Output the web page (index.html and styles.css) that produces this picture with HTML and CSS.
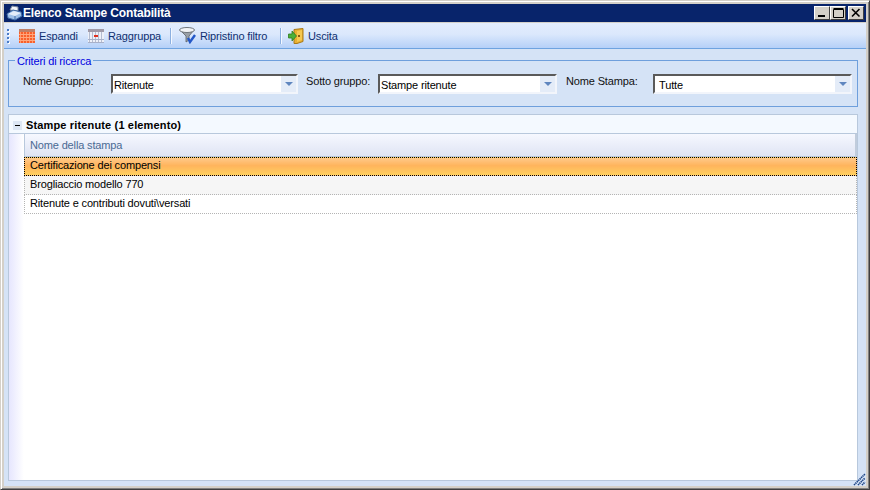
FILE: index.html
```html
<!DOCTYPE html>
<html lang="it">
<head>
    <meta charset="UTF-8">
    <title>Elenco Stampe Contabilità</title>
    <link rel="stylesheet" href="styles.css">
</head>
<body>
    <div class="window">
        <div class="titlebar">
            <svg class="title_icon" width="17" height="16" viewBox="0 0 17 16">
                <path d="M4 5 L6 1 L12 2 L12 6 Z" fill="#f4f6fa" stroke="#7d8aa0" stroke-width="1"/>
                <path d="M1 9 L7 5 L15 7 L16 11 L9 15 L2 13 Z" fill="#9fc0e8" stroke="#3f6aa5" stroke-width="1"/>
                <path d="M2 9 L8 6 L15 8 L9 11 Z" fill="#e4edf9"/>
                <path d="M9 11 L9 15" stroke="#3f6aa5"/>
            </svg>
            <span class="title_text">Elenco Stampe Contabilità</span>
            <div class="title_buttons">
                <button class="caption_btn"><svg width="10" height="10" viewBox="0 0 10 10"><rect x="1" y="7" width="7" height="2" fill="#000"/></svg></button>
                <button class="caption_btn"><svg width="11" height="10" viewBox="0 0 11 10"><path d="M0.5 1.5 H10.5 V9.5 H0.5 Z M0.5 0.5 H10.5" fill="none" stroke="#000"/></svg></button>
                <button class="caption_btn close"><svg width="10" height="10" viewBox="0 0 10 10"><path d="M1 1 L8.5 8.5 M8.5 1 L1 8.5" stroke="#000" stroke-width="1.6"/></svg></button>
            </div>
        </div>

        <div class="toolbar">
            <div class="grip"><i></i><i></i><i></i><i></i></div>
            <div class="tool tool_espandi">
                <svg width="16" height="14" viewBox="0 0 16 14">
                    <rect x="0" y="0" width="16" height="14" fill="#f8602c"/>
                    <rect x="0" y="0" width="16" height="3" fill="#c08068"/>
                    <path d="M1.5 3 V14 M4.5 3 V14 M7.5 3 V14 M10.5 3 V14 M13.5 3 V14" stroke="#ff9a6c"/>
                    <path d="M0 5.5 H16 M0 8.5 H16 M0 11.5 H16" stroke="#ffa880"/>
                </svg>
                <span>Espandi</span>
            </div>
            <div class="tool tool_raggruppa">
                <svg width="16" height="14" viewBox="0 0 16 14">
                    <rect x="0" y="0" width="16" height="14" fill="#eef0f8"/>
                    <rect x="0" y="0" width="16" height="3" fill="#a09aa8"/>
                    <path d="M1.5 3 V14 M4.5 3 V14 M7.5 3 V14 M10.5 3 V14 M13.5 3 V14" stroke="#b4bcd0"/>
                    <path d="M0 10.5 H16 M0 13.5 H16" stroke="#a8b0c8"/>
                    <rect x="6" y="6" width="4" height="2" fill="#e03020"/>
                </svg>
                <span>Raggruppa</span>
            </div>
            <div class="tool_sep"></div>
            <div class="tool tool_filtro">
                <svg width="17" height="17" viewBox="0 0 17 17">
                    <path d="M1 3 L7 9 V15 L10 13 V9 L15 3 Z" fill="#9aa0a7" stroke="#5a6066" stroke-width="0.8"/>
                    <ellipse cx="8" cy="3" rx="7.5" ry="2.5" fill="#f2f3f5" stroke="#70767c"/>
                    <path d="M9 11 L11 15 L16 8" fill="none" stroke="#2458c8" stroke-width="2.4"/>
                </svg>
                <span>Ripristino filtro</span>
            </div>
            <div class="tool_sep sep_two"></div>
            <div class="tool tool_uscita">
                <svg width="16" height="16" viewBox="0 0 16 16">
                    <path d="M6 1.5 L15 0.5 V13.5 L9 15.5 H6 Z" fill="#e8b030" stroke="#a87818"/>
                    <path d="M9 3 L14 2 V12 L9 14 Z" fill="#f6c850"/>
                    <rect x="10" y="7" width="2" height="2" fill="#8a5c10"/>
                    <path d="M0.5 6 H4 V3 L8.5 8 L4 13 V10 H0.5 Z" fill="#4cb038" stroke="#2f7c20" stroke-width="0.8"/>
                </svg>
                <span>Uscita</span>
            </div>
        </div>

        <div class="main">
            <fieldset class="criteria">
                <legend>Criteri di ricerca</legend>
                <label class="crit_label label_one">Nome Gruppo:</label>
                <div class="combo combo_one">
                    <span class="combo_text">Ritenute</span>
                    <span class="combo_arrow"></span>
                </div>
                <label class="crit_label label_two">Sotto gruppo:</label>
                <div class="combo combo_two">
                    <span class="combo_text">Stampe ritenute</span>
                    <span class="combo_arrow"></span>
                </div>
                <label class="crit_label label_three">Nome Stampa:</label>
                <div class="combo combo_three">
                    <span class="combo_text">Tutte</span>
                    <span class="combo_arrow"></span>
                </div>
            </fieldset>

            <div class="grid">
                <div class="group_row">
                    <span class="expander"></span>
                    <span class="group_title">Stampe ritenute (1 elemento)</span>
                </div>
                <div class="grid_body">
                    <div class="indent"></div>
                    <div class="rows">
                        <div class="col_header">Nome della stampa</div>
                        <div class="row selected">Certificazione dei compensi</div>
                        <div class="row alt">Brogliaccio modello 770</div>
                        <div class="row">Ritenute e contributi dovuti\versati</div>
                    </div>
                </div>
            </div>

            <svg class="resize_grip" width="13" height="13" viewBox="0 0 13 13">
                <path d="M1 12 L12 1 M5 12 L12 5 M9 12 L12 9" stroke="#1d4484" stroke-width="1.6" stroke-dasharray="1.4 0.6"/>
            </svg>
        </div>
    </div>
</body>
</html>
```

FILE: styles.css
```css
html, body {
    margin: 0;
    padding: 0;
}

body {
    font-family: "Liberation Sans", Arial, sans-serif;
    font-size: 11px;
    letter-spacing: -0.15px;
    color: #000;
}

.window {
    width: 870px;
    height: 490px;
    box-sizing: border-box;
    display: flex;
    flex-direction: column;
    background: #d4d0c8;
    border-style: solid;
    border-width: 1px;
    border-color: #d4d0c8 #404040 #404040 #d4d0c8;
    box-shadow: inset 1px 1px 0 #fff, inset -1px -1px 0 #808080;
    padding: 3px;
}

.titlebar {
    height: 18px;
    flex: none;
    display: flex;
    align-items: center;
    background: #08246b;
    color: #fff;
    font-weight: bold;
    font-size: 12px;
    padding-left: 2px;
    margin-bottom: 1px;
}

.title_buttons {
    margin-left: auto;
    display: flex;
    margin-right: 2px;
}

.caption_btn {
    width: 16px;
    height: 14px;
    padding: 0;
    background: #d4d0c8;
    border: 1px solid;
    border-color: #fff #404040 #404040 #fff;
    display: flex;
    align-items: center;
    justify-content: center;
}

.caption_btn.close {
    margin-left: 2px;
}

.toolbar {
    height: 25px;
    flex: none;
    display: flex;
    align-items: center;
    background: linear-gradient(to bottom, #e3edfd 0%, #dbe8fc 45%, #b5d0f8 100%);
    border-bottom: 1px solid #6ea3e0;
    color: #0f2f70;
}

.grip {
    display: flex;
    flex-direction: column;
    gap: 2px;
    margin-left: 3px;
    margin-right: 10px;
}

.grip i {
    display: block;
    width: 2px;
    height: 2px;
    background: #4a7cc8;
    box-shadow: 1px 1px 0 #fff;
}

.tool {
    display: flex;
    align-items: center;
    gap: 4px;
}

.tool_espandi {
    width: 69px;
}

.tool_raggruppa {
    width: 82px;
}

.tool_filtro {
    width: 101px;
}

.tool_sep {
    width: 1px;
    height: 16px;
    background: #8cb0e0;
    box-shadow: 1px 0 0 #f4f8ff;
    margin-right: 8px;
}

.sep_two {
    margin-right: 7px;
}

.main {
    flex: 1;
    position: relative;
    background: #d5e3f6;
    padding: 4px 8px 5px 4px;
    display: flex;
    flex-direction: column;
    min-height: 0;
}

.criteria {
    margin: 0;
    height: 54px;
    box-sizing: border-box;
    padding: 0 5px 0 14px;
    border: 1px solid #6e9fdc;
    display: flex;
    align-items: flex-start;
    flex: none;
}

.criteria legend {
    color: #0000e0;
    padding: 2px 2px 0;
    margin-left: -8px;
    font-size: 11px;
    line-height: 13px;
}

.crit_label {
    display: block;
    white-space: nowrap;
    margin-top: 6px;
    line-height: 14px;
    color: #111;
}

.label_one {
    width: 88px;
}

.label_two {
    width: 72px;
    margin-left: 8px;
}

.label_three {
    width: 87px;
    margin-left: 9px;
}

.combo {
    height: 20px;
    box-sizing: border-box;
    margin-top: 6px;
    display: flex;
    background: #fff;
    border: 2px solid;
    border-color: #5a5a5a #f2f5fb #f2f5fb #5a5a5a;
}

.combo_one {
    width: 187px;
}

.combo_two {
    width: 179px;
}

.combo_three {
    width: 199px;
}

.combo_text {
    flex: 1;
    line-height: 18px;
    padding-left: 1px;
}

.combo_three .combo_text {
    padding-left: 4px;
}

.combo_arrow {
    width: 15px;
    background: #e4ecf8;
    position: relative;
}

.combo_arrow::after {
    content: "";
    position: absolute;
    left: 4px;
    top: 6px;
    border-style: solid;
    border-width: 4px 4px 0 4px;
    border-color: #5f86bf transparent transparent transparent;
}

.grid {
    flex: 1;
    margin-top: 7px;
    border: 1px solid #b8c8dc;
    background: #fff;
    display: flex;
    flex-direction: column;
    min-height: 0;
}

.group_row {
    height: 19px;
    flex: none;
    box-sizing: border-box;
    display: flex;
    align-items: center;
    padding-top: 2px;
    background: #f4f9ff;
    border-bottom: 1px solid #b8c8dc;
}

.expander {
    width: 9px;
    height: 9px;
    margin-left: 4px;
    margin-right: 4px;
    background: linear-gradient(#000, #000) center / 5px 1px no-repeat, #dce6f4;
}

.group_title {
    font-weight: bold;
    letter-spacing: 0.15px;
}

.grid_body {
    flex: 1;
    display: flex;
    min-height: 0;
}

.indent {
    width: 15px;
    flex: none;
    background: linear-gradient(to right, #e6e6fe, #fff);
}

.rows {
    flex: 1;
    min-width: 0;
}

.col_header {
    height: 23px;
    box-sizing: border-box;
    line-height: 23px;
    padding-left: 5px;
    color: #4a6a94;
    background: linear-gradient(to bottom, #f6f8ff, #dfe4f4);
    border-left: 1px solid #b8c8dc;
    border-right: 2px solid #c0ccdc;
    border-bottom: 1px solid #b8c8dc;
}

.row {
    height: 19px;
    box-sizing: border-box;
    line-height: 16px;
    padding-left: 5px;
    border-bottom: 1px dotted #b4b4b4;
    border-left: 1px dotted #b4b4b4;
    border-right: 1px dotted #b4b4b4;
}

.row.alt {
    background: #f6f6f6;
}

.row.selected {
    height: 19px;
    background: linear-gradient(to bottom, #ffc98a, #ffb45c 45%, #ffd060);
    border: 1px dotted #000;
    line-height: 14px;
}

.resize_grip {
    position: absolute;
    right: 0;
    bottom: 0;
}
```
